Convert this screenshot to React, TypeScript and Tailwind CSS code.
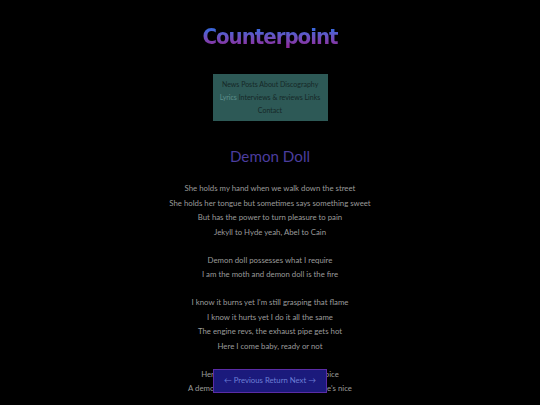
import React from "react";

const stanzas = [
  [
    "She holds my hand when we walk down the street",
    "She holds her tongue but sometimes says something sweet",
    "But has the power to turn pleasure to pain",
    "Jekyll to Hyde yeah, Abel to Cain",
  ],
  ["Demon doll possesses what I require", "I am the moth and demon doll is the fire"],
  [
    "I know it burns yet I'm still grasping that flame",
    "I know it hurts yet I do it all the same",
    "The engine revs, the exhaust pipe gets hot",
    "Here I come baby, ready or not",
  ],
  ["Her kisses are sweet like sugar and spice", "A demon doll that sometimes acts like she's nice"],
];

export default function App() {
  return (
    <div className="min-h-[405px] bg-black text-center" style={{ fontFamily: "Lato, 'Open Sans', sans-serif" }}>
      <div className="pt-[22px]">
        <h1
          className="inline-block bg-gradient-to-b from-[#3c66da] from-[25%] to-[#8a2a9e] to-[80%] bg-clip-text text-[22px] font-bold leading-[30px] tracking-[-1px] text-transparent"
          style={{ fontFamily: "'DejaVu Sans Condensed', 'DejaVu Sans', sans-serif" }}
        >
          Counterpoint
        </h1>
      </div>
      <nav className="mx-auto mt-[22px] w-[115px] bg-[#2d5956] py-[4px] text-[7px] leading-[13px] text-[#152827]">
        <a>News</a> <a>Posts</a> <a>About</a> <a>Discography</a>{" "}
        <a className="text-[#5e8f8b]">Lyrics</a> <a>Interviews &amp; reviews</a> <a>Links</a> <a>Contact</a>
      </nav>
      <h2 className="mt-[24px] text-[15.2px] leading-[22px] text-[#4b3d9e]">Demon Doll</h2>
      <div className="mt-[14px] flex flex-col gap-[13.5px] pb-[40px] text-[7.8px] leading-[14.5px] text-[#9b9b9b]">
        {stanzas.map((s, i) => (
          <p key={i}>
            {s.map((l, j) => (
              <span key={j} className="block">
                {l}
              </span>
            ))}
          </p>
        ))}
      </div>
      <div className="fixed bottom-[12px] left-1/2 flex h-[24px] w-[114px] -translate-x-1/2 items-center justify-center border border-[#5a2ca6] bg-[#1b1a7c] text-[7.75px] text-[#6d7fd6]">
        ← Previous Return Next →
      </div>
    </div>
  );
}
